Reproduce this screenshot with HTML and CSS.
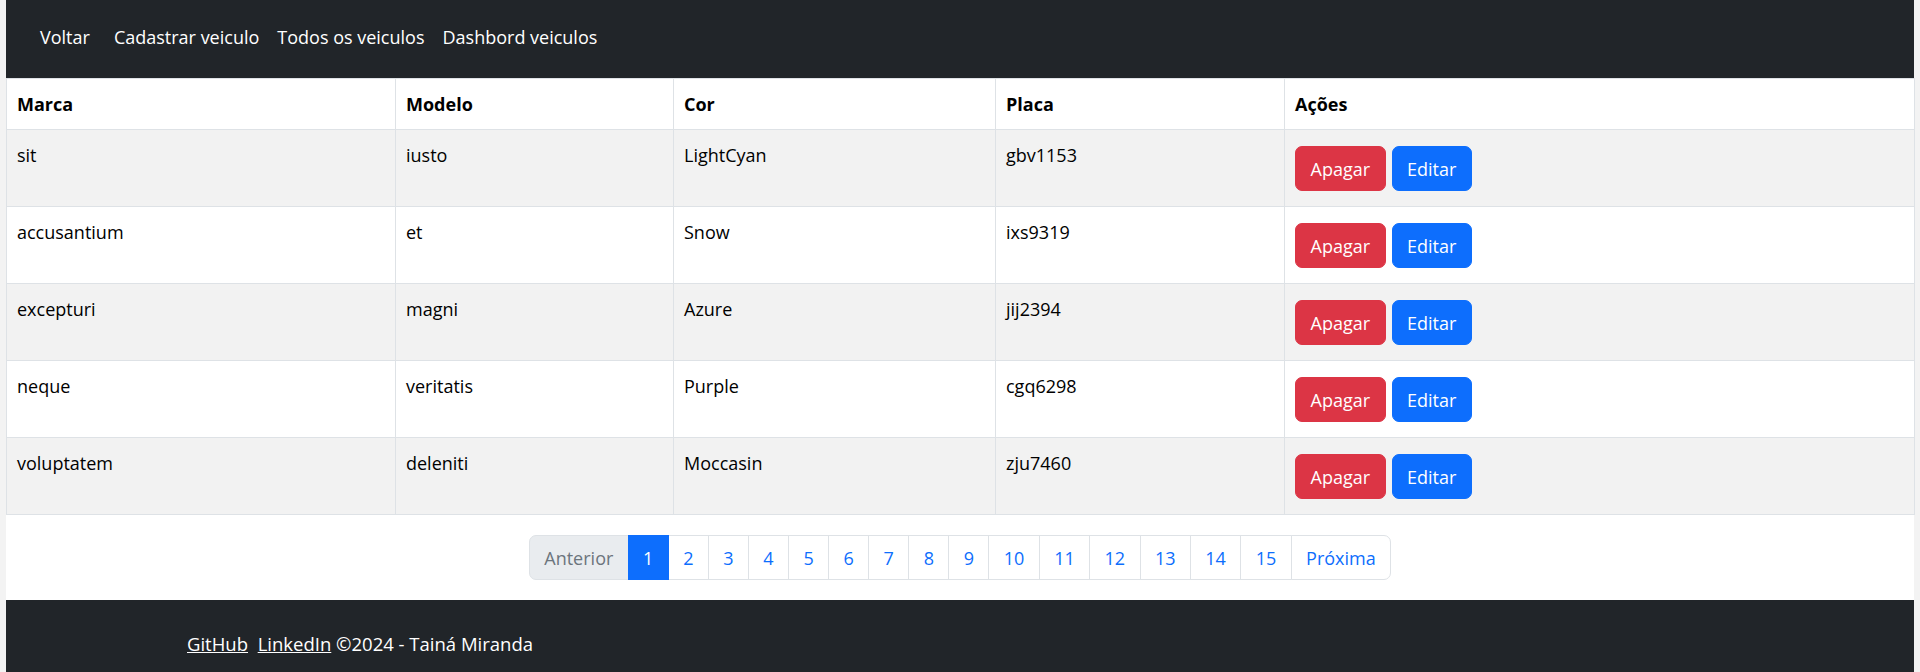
FILE: index.html
```html
<!DOCTYPE html>
<html lang="pt-BR">
<head>
<meta charset="utf-8">
<title>Veiculos</title>
<link rel="stylesheet" href="styles.css">
</head>
<body>
<div class="page">
  <nav class="navbar">
    <a class="nav-link brand" href="#">Voltar</a>
    <a class="nav-link" href="#">Cadastrar veiculo</a>
    <a class="nav-link" href="#">Todos os veiculos</a>
    <a class="nav-link" href="#">Dashbord veiculos</a>
  </nav>
  <main class="content">
    <table class="table">
      <colgroup>
        <col class="c1"><col class="c2"><col class="c3"><col class="c4"><col class="c5">
      </colgroup>
      <thead>
        <tr><th>Marca</th><th>Modelo</th><th>Cor</th><th>Placa</th><th>Ações</th></tr>
      </thead>
      <tbody>
        <tr class="odd"><td>sit</td><td>iusto</td><td>LightCyan</td><td>gbv1153</td><td class="actions"><div class="btns"><button class="btn btn-danger">Apagar</button><button class="btn btn-primary">Editar</button></div></td></tr>
        <tr><td>accusantium</td><td>et</td><td>Snow</td><td>ixs9319</td><td class="actions"><div class="btns"><button class="btn btn-danger">Apagar</button><button class="btn btn-primary">Editar</button></div></td></tr>
        <tr class="odd"><td>excepturi</td><td>magni</td><td>Azure</td><td>jij2394</td><td class="actions"><div class="btns"><button class="btn btn-danger">Apagar</button><button class="btn btn-primary">Editar</button></div></td></tr>
        <tr><td>neque</td><td>veritatis</td><td>Purple</td><td>cgq6298</td><td class="actions"><div class="btns"><button class="btn btn-danger">Apagar</button><button class="btn btn-primary">Editar</button></div></td></tr>
        <tr class="odd"><td>voluptatem</td><td>deleniti</td><td>Moccasin</td><td>zju7460</td><td class="actions"><div class="btns"><button class="btn btn-danger">Apagar</button><button class="btn btn-primary">Editar</button></div></td></tr>
      </tbody>
    </table>
    <div class="pager-wrap">
      <ul class="pagination">
        <li class="page-item disabled"><span class="page-link">Anterior</span></li>
        <li class="page-item active"><span class="page-link">1</span></li>
        <li class="page-item"><a class="page-link" href="#">2</a></li>
        <li class="page-item"><a class="page-link" href="#">3</a></li>
        <li class="page-item"><a class="page-link" href="#">4</a></li>
        <li class="page-item"><a class="page-link" href="#">5</a></li>
        <li class="page-item"><a class="page-link" href="#">6</a></li>
        <li class="page-item"><a class="page-link" href="#">7</a></li>
        <li class="page-item"><a class="page-link" href="#">8</a></li>
        <li class="page-item"><a class="page-link" href="#">9</a></li>
        <li class="page-item"><a class="page-link" href="#">10</a></li>
        <li class="page-item"><a class="page-link" href="#">11</a></li>
        <li class="page-item"><a class="page-link" href="#">12</a></li>
        <li class="page-item"><a class="page-link" href="#">13</a></li>
        <li class="page-item"><a class="page-link" href="#">14</a></li>
        <li class="page-item"><a class="page-link" href="#">15</a></li>
        <li class="page-item"><a class="page-link" href="#">Próxima</a></li>
      </ul>
    </div>
  </main>
  <footer class="footer">
    <a href="#">GitHub</a>&nbsp; <a href="#">LinkedIn</a> ©2024 - Tainá Miranda
  </footer>
</div>
</body>
</html>
```

FILE: styles.css
```css
* { box-sizing: border-box; }
html, body { margin: 0; padding: 0; }
body {
  background: #f3f3f3;
  font-family: "Open Sans", "Noto Sans", sans-serif;
  font-size: 18px;
  line-height: 30px;
  color: #212529;
}
.page {
  margin: 0 6px;
  background: #fff;
  min-height: 672px;
}
.navbar {
  background: #212529;
  height: 78px;
  display: flex;
  align-items: center;
  padding: 0 0 4px 25px;
}
.nav-link {
  color: #fff;
  text-decoration: none;
  padding: 0 9px;
}
.brand { margin-right: 6px; }
.table {
  width: 100%;
  border-collapse: collapse;
  table-layout: fixed;
}
.c1 { width: 389px; }
.c2 { width: 278px; }
.c3 { width: 322px; }
.c4 { width: 289px; }
.c5 { width: 630px; }
.table th, .table td {
  border: 1px solid #dee2e6;
  padding: 10px;
  text-align: left;
  vertical-align: top;
  color: #000;
}
.table th { font-weight: 700; }
.table tr.odd td { background: #f2f2f2; }
.btns {
  display: flex;
  gap: 6px;
  margin: 6px 0 5px;
}
.btn {
  font-family: inherit;
  font-size: 18px;
  line-height: 30px;
  color: #fff;
  border: 1px solid transparent;
  border-radius: 7px;
  padding: 6.5px 14.5px;
  cursor: pointer;
}
.btn-danger { background: #dc3545; border-color: #dc3545; }
.btn-primary { background: #0d6efd; border-color: #0d6efd; }
.pager-wrap {
  display: flex;
  justify-content: center;
  padding: 20px 0;
}
.pagination {
  display: flex;
  list-style: none;
  margin: 0;
  padding: 0;
}
.page-link {
  display: block;
  padding: 6.5px 14.4px;
  border: 1px solid #dee2e6;
  margin-left: -1px;
  color: #0d6efd;
  background: #fff;
  text-decoration: none;
}
.page-item:first-child .page-link { margin-left: 0; border-radius: 7px 0 0 7px; }
.page-item:last-child .page-link { border-radius: 0 7px 7px 0; }
.page-item.disabled .page-link { color: #6c757d; background: #e9ecef; }
.page-item.active .page-link { color: #fff; background: #0d6efd; border-color: #0d6efd; position: relative; }
.footer {
  background: #212529;
  color: #fff;
  height: 72px;
  padding: 29px 0 0 181px;
  font-size: 18.5px;
}
.footer a { color: #fff; text-decoration: underline; }
```
